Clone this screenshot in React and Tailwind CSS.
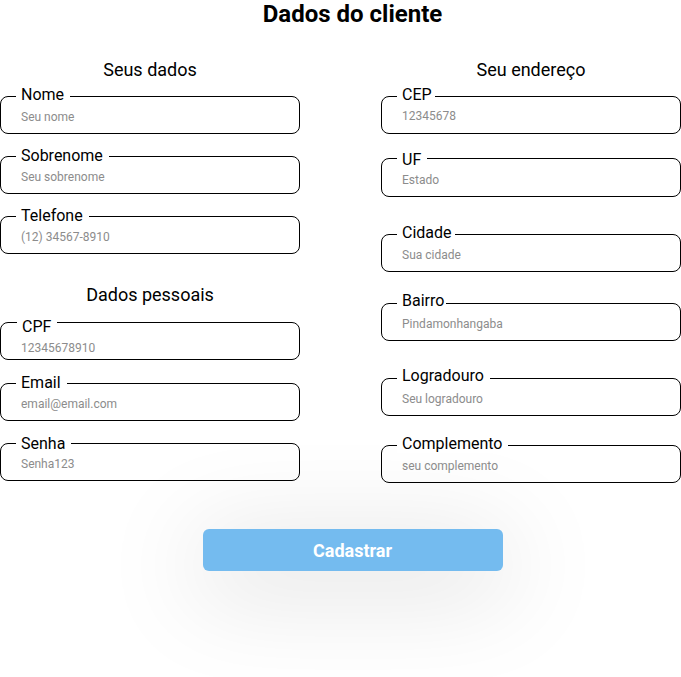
import React from "react";

const leftTop = [
  { label: "Nome", ph: "Seu nome", mt: "mt-[16px]", lt: "-top-[12px]", pt: "pt-[12px]" },
  { label: "Sobrenome", ph: "Seu sobrenome", mt: "mt-[22px]", lt: "-top-[11px]", pt: "pt-[12px]" },
  { label: "Telefone", ph: "(12) 34567-8910", mt: "mt-[22px]", lt: "-top-[11.5px]", pt: "pt-[12px]" },
];

const leftBottom = [
  { label: "CPF", ph: "12345678910", mt: "mt-[17px]", lt: "-top-[6px]", pt: "pt-[17px]", lx: "left-[16px]" },
  { label: "Email", ph: "email@email.com", mt: "mt-[23px]", lt: "-top-[11px]", pt: "pt-[12px]" },
  { label: "Senha", ph: "Senha123", mt: "mt-[22px]", lt: "-top-[10.5px]", pt: "pt-[12px]" },
];

const right = [
  { label: "CEP", ph: "12345678", mt: "mt-[16px]", lt: "-top-[12px]", pt: "pt-[11px]", lr: "pr-[3px]" },
  { label: "UF", ph: "Estado", mt: "mt-[24px]", lt: "-top-[9px]", pt: "pt-[13px]", h: "h-[39px]" },
  { label: "Cidade", ph: "Sua cidade", mt: "mt-[37px]", lt: "-top-[12px]", pt: "pt-[12px]", lr: "pr-[3px]" },
  { label: "Bairro", ph: "Pindamonhangaba", mt: "mt-[31px]", lt: "-top-[13px]", pt: "pt-[12px]", lr: "pr-[2px]" },
  { label: "Logradouro", ph: "Seu logradouro", mt: "mt-[37px]", lt: "-top-[13px]", pt: "pt-[12px]" },
  { label: "Complemento", ph: "seu complemento", mt: "mt-[29px]", lt: "-top-[12px]", pt: "pt-[12px]" },
];

function Field({ f }) {
  return (
    <div
      className={`relative ${f.mt} ${f.h || "h-[38px]"} rounded-lg border border-black pl-[20px] pr-3 ${f.pt}`}
    >
      <label
        className={`absolute ${f.lx || "left-[15px]"} ${f.lt} bg-white pl-[5px] ${f.lr || "pr-[6px]"} text-[16px] leading-[19px] text-black`}
      >
        {f.label}
      </label>
      <input
        type="text"
        placeholder={f.ph}
        className="block h-[16px] w-full bg-transparent text-[12px] leading-[16px] text-black outline-none placeholder:text-[#8c8c8c]"
      />
    </div>
  );
}

function Heading({ children, mt }) {
  return (
    <h2 className={`${mt} text-center text-[18px] leading-[21px] font-normal text-black`}>
      {children}
    </h2>
  );
}

export default function App() {
  return (
    <div className="h-[677px] w-[681px] overflow-hidden bg-white font-['Roboto',sans-serif] text-black">
      <div className="pl-6 text-center">
        <h1 className="text-[24px] leading-[28px] font-bold">Dados do cliente</h1>
      </div>
      <div className="flex gap-[81px]">
        <div className="flex w-[300px] flex-col">
          <Heading mt="mt-[31px]">Seus dados</Heading>
          {leftTop.map((f) => (
            <Field key={f.label} f={f} />
          ))}
          <Heading mt="mt-[30px]">Dados pessoais</Heading>
          {leftBottom.map((f) => (
            <Field key={f.label} f={f} />
          ))}
        </div>
        <div className="flex w-[300px] flex-col">
          <Heading mt="mt-[31px]">Seu endereço</Heading>
          {right.map((f) => (
            <Field key={f.label} f={f} />
          ))}
        </div>
      </div>
      <div className="mt-[46px] flex justify-center pl-6">
        <button
          type="button"
          className="h-[42px] w-[300px] rounded-md bg-[#74bbef] text-[18px] font-bold text-white shadow-[0_15px_100px_8px_rgba(0,0,0,0.13)]"
        >
          Cadastrar
        </button>
      </div>
    </div>
  );
}
